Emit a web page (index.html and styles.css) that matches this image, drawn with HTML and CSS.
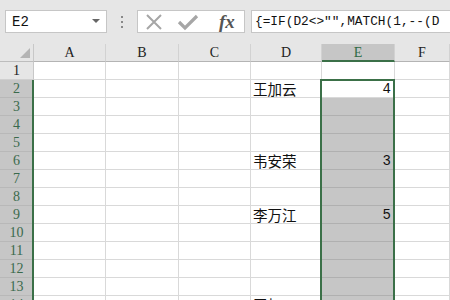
FILE: index.html
```html
<!DOCTYPE html>
<html>
<head>
<meta charset="utf-8">
<link rel="stylesheet" href="styles.css">
</head>
<body>
<div class="toolbar">
  <div class="namebox"><span class="ref">E2</span><span class="caret"></span></div>
  <div class="dots"><i></i><i></i><i></i></div>
  <div class="btnbox">
    <svg class="icon" width="20" height="20" viewBox="0 0 20 20"><path d="M3 3 L17 17 M17 3 L3 17" stroke="#a6a6a6" stroke-width="2" fill="none"/></svg>
    <svg class="icon" width="22" height="20" viewBox="0 0 22 20"><path d="M2 10 L8 16 L20 4" stroke="#a6a6a6" stroke-width="3.2" fill="none"/></svg>
    <span class="fx">fx</span>
  </div>
  <div class="formula">{=IF(D2&lt;&gt;"",MATCH(1,--(D</div>
</div>
<div class="sheet">
  <div class="corner"><span class="tri"></span></div>
  <div class="ch">A</div><div class="ch">B</div><div class="ch">C</div><div class="ch">D</div><div class="ch chsel">E</div><div class="ch">F</div>

  <div class="rh">1</div><div class="c"></div><div class="c"></div><div class="c"></div><div class="c"></div><div class="c"></div><div class="c"></div>
  <div class="rh rhsel">2</div><div class="c"></div><div class="c"></div><div class="c"></div><div class="c t">王加云</div><div class="c n act">4</div><div class="c"></div>
  <div class="rh rhsel">3</div><div class="c"></div><div class="c"></div><div class="c"></div><div class="c"></div><div class="c sel"></div><div class="c"></div>
  <div class="rh rhsel">4</div><div class="c"></div><div class="c"></div><div class="c"></div><div class="c"></div><div class="c sel"></div><div class="c"></div>
  <div class="rh rhsel">5</div><div class="c"></div><div class="c"></div><div class="c"></div><div class="c"></div><div class="c sel"></div><div class="c"></div>
  <div class="rh rhsel">6</div><div class="c"></div><div class="c"></div><div class="c"></div><div class="c t">韦安荣</div><div class="c sel n">3</div><div class="c"></div>
  <div class="rh rhsel">7</div><div class="c"></div><div class="c"></div><div class="c"></div><div class="c"></div><div class="c sel"></div><div class="c"></div>
  <div class="rh rhsel">8</div><div class="c"></div><div class="c"></div><div class="c"></div><div class="c"></div><div class="c sel"></div><div class="c"></div>
  <div class="rh rhsel">9</div><div class="c"></div><div class="c"></div><div class="c"></div><div class="c t">李万江</div><div class="c sel n">5</div><div class="c"></div>
  <div class="rh rhsel">10</div><div class="c"></div><div class="c"></div><div class="c"></div><div class="c"></div><div class="c sel"></div><div class="c"></div>
  <div class="rh rhsel">11</div><div class="c"></div><div class="c"></div><div class="c"></div><div class="c"></div><div class="c sel"></div><div class="c"></div>
  <div class="rh rhsel">12</div><div class="c"></div><div class="c"></div><div class="c"></div><div class="c"></div><div class="c sel"></div><div class="c"></div>
  <div class="rh rhsel">13</div><div class="c"></div><div class="c"></div><div class="c"></div><div class="c"></div><div class="c sel"></div><div class="c"></div>
  <div class="rh rhsel">14</div><div class="c"></div><div class="c"></div><div class="c"></div><div class="c t">王加云</div><div class="c sel"></div><div class="c"></div>

  <div class="selbox"></div>
  <div class="rowline"></div>
</div>
</body>
</html>
```
FILE: styles.css
```css
* { box-sizing: border-box; }
html, body { margin: 0; padding: 0; overflow: hidden; }
body {
  width: 450px; height: 300px;
  background: #fff;
  font-family: "Liberation Serif", "Noto Sans CJK SC", serif;
}
.toolbar {
  height: 44px;
  display: flex;
  align-items: flex-start;
  padding: 10px 0 0 5px;
  background: #e6e6e6;
}
.namebox {
  width: 102px; height: 23px;
  background: #fff;
  border: 1px solid #c6c6c6;
  display: flex; align-items: center; justify-content: space-between;
  padding: 0 6px 0 6px;
}
.ref { font-family: "Liberation Mono", monospace; font-size: 14px; color: #111; }
.caret {
  width: 0; height: 0;
  border-left: 4px solid transparent; border-right: 4px solid transparent;
  border-top: 4px solid #666;
  margin-top: -2px;
}
.dots {
  width: 30px; height: 23px;
  display: flex; flex-direction: column; align-items: center; justify-content: center; gap: 3px;
}
.dots i { display: block; width: 2px; height: 2px; background: #888; }
.btnbox {
  width: 108px; height: 23px;
  background: #fff;
  border: 1px solid #c6c6c6;
  display: flex; align-items: center;
  padding-left: 6px;
}
.icon { display: block; }
.btnbox .icon:first-child { margin-right: 13px; }
.btnbox .icon:nth-child(2) { margin-right: 20px; }
.fx {
  font-family: "Liberation Serif", serif;
  font-style: italic; font-weight: bold;
  font-size: 19px; color: #555;
  line-height: 20px;
}
.formula {
  margin-left: 6px;
  flex: 1;
  height: 23px;
  background: #fff;
  border: 1px solid #c6c6c6;
  border-right: none;
  font-family: "Liberation Mono", monospace;
  font-size: 12.8px;
  line-height: 21px;
  padding-left: 3px;
  color: #111;
  white-space: nowrap;
  overflow: hidden;
}
.sheet {
  position: relative;
  display: grid;
  grid-template-columns: 34px 72px 73px 72px 71px 73px 55px;
  grid-auto-rows: 18px;
  height: 256px;
  overflow: hidden;
  background: #fff;
}
.corner {
  background: #e6e6e6;
  border-right: 1px solid #c8c8c8;
  border-bottom: 1px solid #bdbdbd;
  position: relative;
}
.tri {
  position: absolute; right: 3px; bottom: 3px;
  width: 0; height: 0;
  border-left: 10px solid transparent;
  border-bottom: 10px solid #b4b4b4;
}
.ch {
  background: #e6e6e6;
  border-right: 1px solid #d2d2d2;
  border-bottom: 1px solid #b4b4b4;
  text-align: center;
  font-size: 14px; line-height: 17px;
  color: #222;
}
.chsel {
  background: #c6c6c6;
  color: #2e6b44;
  border-bottom: 2px solid #3b7048;
}
.rh {
  background: #e6e6e6;
  border-right: 1px solid #c8c8c8;
  border-bottom: 1px solid #d0d0d0;
  text-align: center;
  font-size: 14px; line-height: 18px;
  color: #222;
}
.rhsel {
  background: #c6c6c6;
  color: #3a6a4c;
  border-bottom-color: #b8b8b8;
}
.c {
  border-right: 1px solid #d9d9d9;
  border-bottom: 1px solid #d9d9d9;
  font-size: 14.5px; line-height: 17px;
  color: #111;
  white-space: nowrap;
}
.t { padding-left: 2px; font-family: "Noto Sans CJK SC", sans-serif; font-size: 14.5px; }
.n { text-align: right; padding-right: 3px; font-family: "Liberation Mono", monospace; font-size: 14px; line-height: 19px; }
.sel { background: #c6c6c6; border-bottom-color: #b0b0b0; border-right-color: #e8f0ea; }
.act { background: #fff; }
.selbox {
  position: absolute;
  left: 320px; top: 35px;
  width: 75px; height: 300px;
  border: 2px solid #3b7048;
  pointer-events: none;
}
.rowline {
  position: absolute;
  left: 32px; top: 36px;
  width: 2px; height: 300px;
  background: #3b7048;
}
```
